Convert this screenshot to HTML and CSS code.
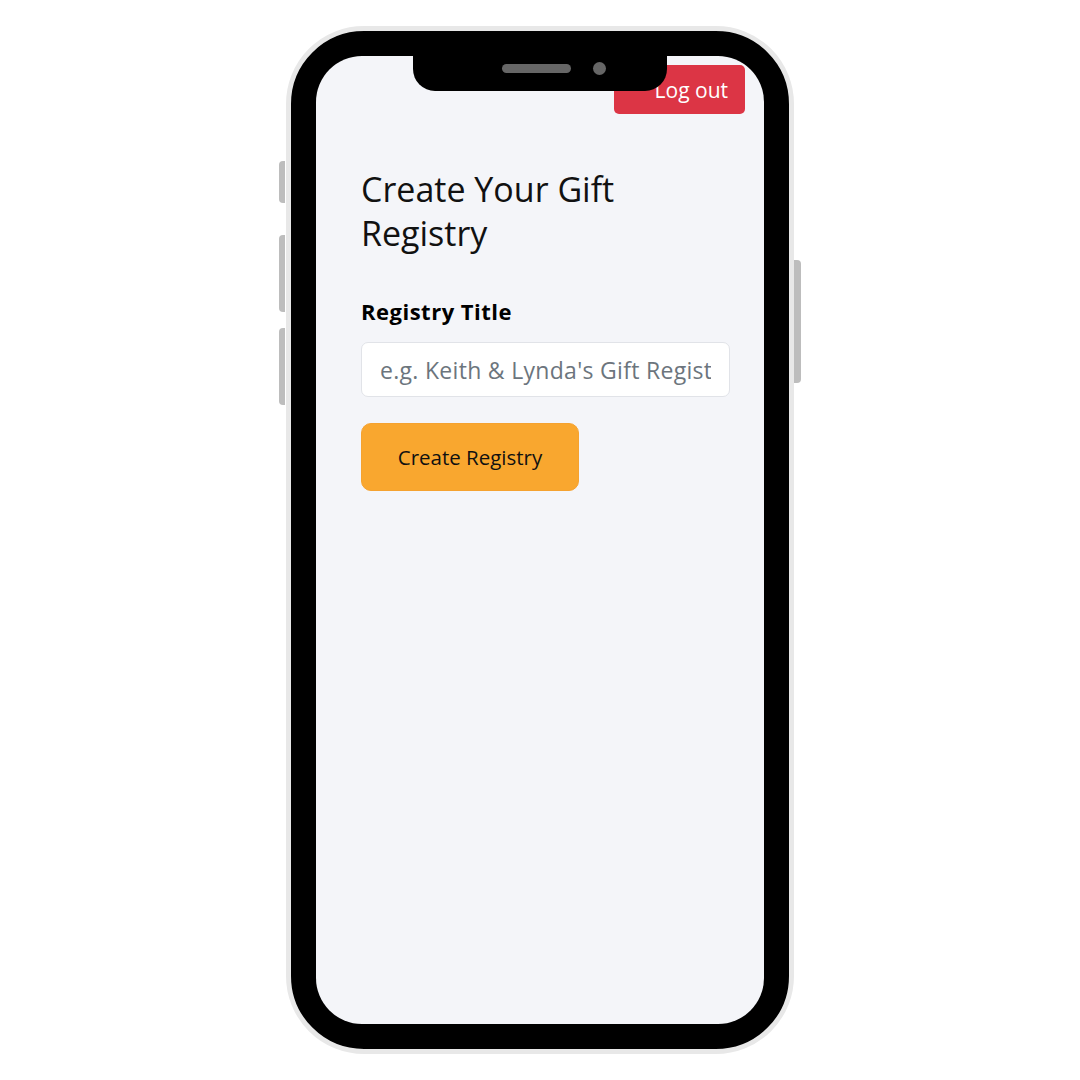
FILE: index.html
```html
<!DOCTYPE html>
<html lang="en">
<head>
<meta charset="utf-8">
<title>Create Your Gift Registry</title>
<link rel="stylesheet" href="styles.css">
</head>
<body>
<div class="stage">
  <div class="phone">
    <span class="side-btn side-l1"></span>
    <span class="side-btn side-l2"></span>
    <span class="side-btn side-l3"></span>
    <span class="side-btn side-r1"></span>
    <div class="screen">
      <div class="notch">
        <span class="speaker"></span>
        <span class="camera"></span>
      </div>
      <header class="topbar">
        <button class="logout">Log out</button>
      </header>
      <main class="content">
        <h2 class="title">Create Your Gift Registry</h2>
        <label class="field-label" for="regtitle">Registry Title</label>
        <input id="regtitle" class="field-input" type="text" placeholder="e.g. Keith &amp; Lynda's Gift Registry">
        <button class="create-btn">Create Registry</button>
      </main>
    </div>
  </div>
</div>
</body>
</html>
```
FILE: styles.css
```css
html, body {
  margin: 0;
  padding: 0;
  background: #ffffff;
}
.stage {
  width: 1080px;
  height: 1080px;
  display: flex;
  align-items: center;
  justify-content: center;
}
.phone {
  position: relative;
  box-sizing: border-box;
  width: 508px;
  height: 1028px;
  border: 5px solid #e8e8e8;
  border-radius: 78px;
  background: #000;
  padding: 25px;
}
.side-btn {
  position: absolute;
  width: 6px;
  background: #bdbdbd;
}
.side-l1, .side-l2, .side-l3 {
  left: -12px;
  border-radius: 4px 0 0 4px;
}
.side-l1 { top: 130px; height: 42px; }
.side-l2 { top: 204px; height: 77px; }
.side-l3 { top: 297px; height: 77px; }
.side-r1 {
  right: -12px;
  top: 229px;
  height: 123px;
  width: 7px;
  border-radius: 0 4px 4px 0;
}
.screen {
  position: relative;
  height: 100%;
  background: #f4f5f9;
  border-radius: 46px;
  overflow: hidden;
  font-family: "Open Sans", "Noto Sans", sans-serif;
}
.notch {
  position: absolute;
  top: 0;
  left: 97px;
  width: 254px;
  height: 35px;
  background: #000;
  border-radius: 0 0 22px 22px;
  display: flex;
  align-items: flex-start;
  justify-content: flex-start;
  gap: 22px;
  padding: 8px 0 0 89px;
  box-sizing: border-box;
  z-index: 2;
}
.speaker {
  width: 69px;
  height: 9px;
  border-radius: 5px;
  background: #666;
}
.camera {
  width: 13px;
  height: 13px;
  border-radius: 50%;
  background: #666;
  margin-top: -2px;
}
.topbar {
  display: flex;
  justify-content: flex-end;
  padding: 9px 19px 0 0;
}
.logout {
  box-sizing: border-box;
  width: 131px;
  height: 49px;
  padding: 0 17px 0 0;
  text-align: right;
  border: none;
  border-radius: 5px;
  background: #dc3545;
  color: #fff;
  font-family: "Open Sans", "Noto Sans", sans-serif;
  font-size: 21px;
}
.content {
  padding: 0 34px 0 45px;
  display: flex;
  flex-direction: column;
  align-items: flex-start;
}
.title {
  margin: 53px 0 0;
  font-size: 34px;
  line-height: 44px;
  font-weight: 400;
  color: #111;
}
.field-label {
  margin-top: 42px;
  font-size: 22px;
  line-height: 28px;
  font-weight: 700;
  letter-spacing: 0.5px;
  color: #000;
}
.field-input {
  box-sizing: border-box;
  margin-top: 17px;
  width: 100%;
  height: 55px;
  border: 1px solid #e1e3e8;
  border-radius: 7px;
  background: #fff;
  padding: 0 18px;
  font-family: "Open Sans", "Noto Sans", sans-serif;
  font-size: 23px;
  letter-spacing: 0.3px;
  color: #333;
}
.field-input::placeholder {
  color: #6c757d;
}
.create-btn {
  box-sizing: border-box;
  margin-top: 26px;
  width: 218px;
  height: 68px;
  border: 1px solid #f5a230;
  border-radius: 10px;
  background: #f9a72f;
  color: #111;
  font-family: "Open Sans", "Noto Sans", sans-serif;
  font-size: 20.5px;
}
```
